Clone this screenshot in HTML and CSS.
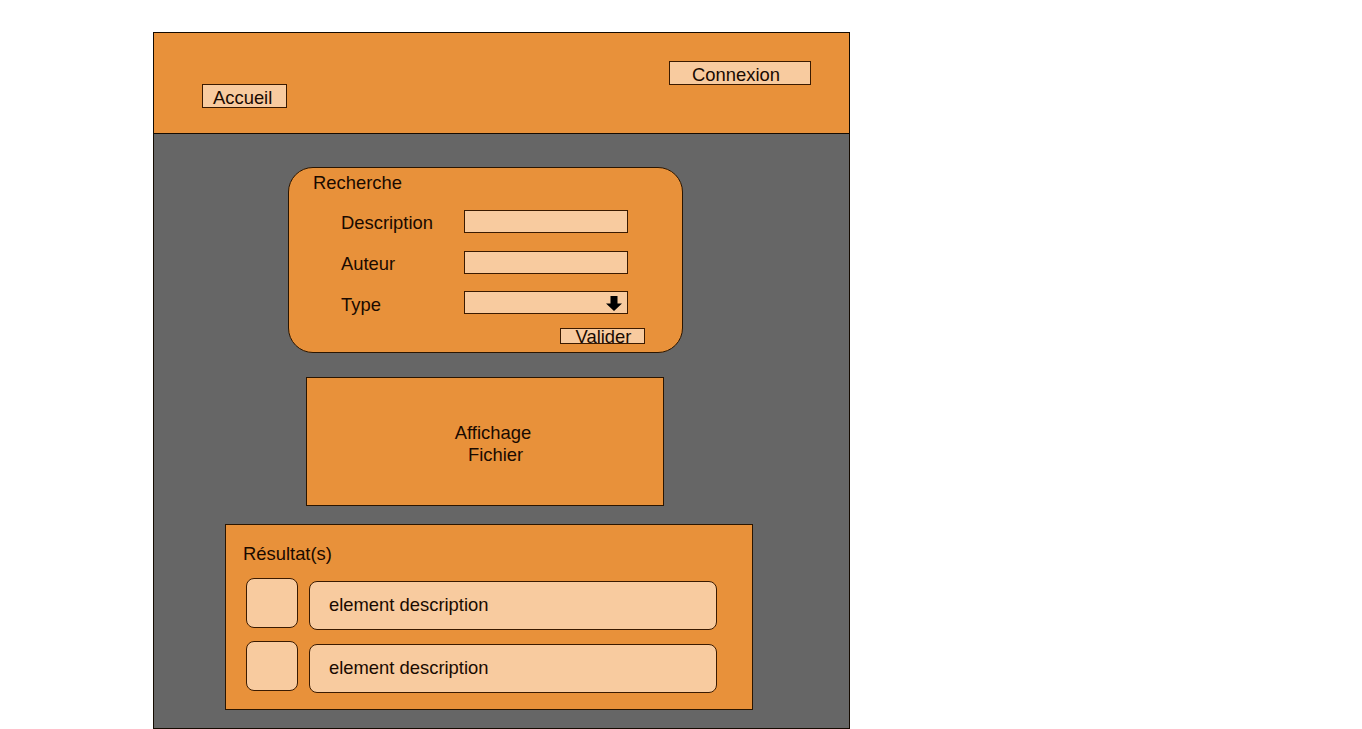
FILE: index.html
```html
<!DOCTYPE html>
<html lang="fr">
<head>
    <meta charset="UTF-8">
    <meta name="viewport" content="width=device-width, initial-scale=1.0">
    <title>Recherche de fichiers</title>
<link rel="stylesheet" href="styles.css">
</head>
<body>

    <div class="frame">
        <div class="top-bar">
            <a class="btn btn-home">Accueil</a>
            <a class="btn btn-login">Connexion</a>
        </div>

        <div class="main">
            <div class="search-box">
                <div class="box-title">Recherche</div>
                <form action="" class="search-form">
                    <label for="description">Description</label>
                    <input type="text" id="description">
                    <label for="auteur">Auteur</label>
                    <input type="text" id="auteur">
                    <label for="type">Type</label>
                    <div class="select" id="type">
                        <svg width="16" height="15" viewBox="0 0 16 15">
                            <path d="M4.5 0 H11.5 V7.5 H16 L8 15 L0 7.5 H4.5 Z" fill="#000"/>
                        </svg>
                    </div>
                </form>
                <a class="btn btn-submit">Valider</a>
            </div>

            <div class="file-view">
                <span>Affichage</span>
                <span>&nbsp;Fichier</span>
            </div>

            <div class="results">
                <div class="box-title">Résultat(s)</div>
                <div class="results-list"></div>
            </div>
        </div>
    </div>

    <script>
        let results = [
            {id: 1, description: 'element description'},
            {id: 2, description: 'element description'},
        ];

        let list = document.querySelector('.results-list');
        list.innerHTML = '';
        for (const item of results) {
            list.innerHTML += `<div class="item-wrapper">
                                    <div class="thumb"></div>
                                    <div class="desc">${item.description}</div>
                               </div>`;
        }
    </script>
</body>
</html>
```

FILE: styles.css
```css
body {
    margin: 0;
    background-color: white;
    font-family: "Liberation Sans", Arial, sans-serif;
    font-size: 18.4px;
    color: #1a0a00;
}

.frame {
    margin: 32px 0 0 153px;
    width: 697px;
    height: 697px;
    box-sizing: border-box;
    border: 1px solid #140a00;
}

.top-bar {
    height: 101px;
    box-sizing: border-box;
    background-color: #e8913a;
    border-bottom: 1px solid #140a00;
    display: flex;
    align-items: flex-start;
    padding-left: 48px;
}

.btn {
    display: block;
    box-sizing: border-box;
    background-color: #f8cb9f;
    border: 1px solid #3a1a00;
    cursor: pointer;
}

.btn-home {
    width: 85px;
    height: 24px;
    margin-top: 51px;
    padding: 3px 0 0 10px;
    line-height: 20px;
}

.btn-login {
    width: 142px;
    height: 24px;
    margin: 28px 38px 0 auto;
    padding: 3px 0 0 22px;
    line-height: 20px;
}

.main {
    height: 594px;
    background-color: #666666;
    padding-top: 33px;
    box-sizing: border-box;
    overflow: hidden;
}

.box-title {
    line-height: 22px;
}

.search-box {
    width: 395px;
    height: 186px;
    box-sizing: border-box;
    margin-left: 134px;
    padding: 4px 0 0 24px;
    background-color: #e8913a;
    border: 1px solid #2a1500;
    border-radius: 25px;
}

.search-form {
    display: grid;
    grid-template-columns: 123px 164px;
    grid-template-rows: 23px 23px 23px;
    row-gap: 18px;
    margin: 16px 0 0 28px;
}

.search-form label {
    line-height: 23px;
    padding-top: 1px;
}

.search-form input,
.search-form .select {
    box-sizing: border-box;
    width: 164px;
    height: 23px;
    margin: 0;
    padding: 0;
    background-color: #f8cb9f;
    border: 1px solid #3a1a00;
    border-radius: 0;
    outline: none;
}

.search-form .select {
    display: flex;
    align-items: center;
    justify-content: flex-end;
    padding: 2px 5px 0 0;
    margin-top: -1px;
}

.btn-submit {
    width: 85px;
    height: 16px;
    margin: 13px 0 0 247px;
    line-height: 14px;
    text-align: center;
    padding: 1px 0 0 2px;
}

.file-view {
    width: 358px;
    height: 129px;
    box-sizing: border-box;
    margin: 24px 0 0 152px;
    padding: 4px 0 0 16px;
    background-color: #e8913a;
    border: 1px solid #2a1500;
    display: flex;
    flex-direction: column;
    justify-content: center;
    align-items: center;
    line-height: 22px;
}

.results {
    width: 528px;
    height: 186px;
    box-sizing: border-box;
    margin: 18px 0 0 71px;
    padding: 18px 0 0 17px;
    background-color: #e8913a;
    border: 1px solid #2a1500;
}

.results-list {
    margin-top: 13px;
    display: flex;
    flex-direction: column;
    gap: 11px;
}

.results-list .item-wrapper {
    display: flex;
    align-items: flex-start;
    gap: 11px;
    margin-left: 3px;
}

.results-list .thumb {
    width: 52px;
    height: 50px;
    box-sizing: border-box;
    background-color: #f8cb9f;
    border: 1px solid #3a1a00;
    border-radius: 8px;
}

.results-list .desc {
    width: 408px;
    height: 49px;
    box-sizing: border-box;
    margin-top: 3px;
    padding-left: 19px;
    line-height: 45px;
    background-color: #f8cb9f;
    border: 1px solid #3a1a00;
    border-radius: 8px;
}
```
